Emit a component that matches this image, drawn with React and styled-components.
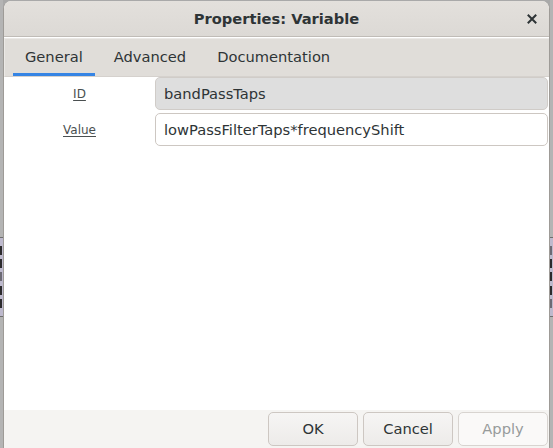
import React, { useState } from 'react';
import styled, { createGlobalStyle } from 'styled-components';

const GlobalStyle = createGlobalStyle`
  html, body {
    margin: 0;
    padding: 0;
    background: #a9a9a9;
  }
  body {
    font-family: "DejaVu Sans", "Liberation Sans", sans-serif;
    color: #2e3436;
  }
`;

const Screen = styled.div`
  display: flex;
  flex-direction: row;
  width: 553px;
  height: 448px;
  overflow: hidden;
`;

const BackStrip = styled.div`
  display: flex;
  flex-direction: column;
  width: 3px;
  background: #b4b4b4;
  padding-top: 237px;
  align-items: ${p => (p.side === 'left' ? 'flex-end' : 'flex-start')};
`;

const BackWindow = styled.div`
  width: 3px;
  height: 80px;
  background: #bdb9cd;
  border-top: 1px solid #6e6e6e;
  border-bottom: 1px solid #6e6e6e;
  display: flex;
  flex-direction: column;
  justify-content: space-around;
  padding: 6px 0;
  box-sizing: border-box;
`;

const BackText = styled.div`
  height: 9px;
  width: 2px;
  background: #1c1c1c;
  opacity: ${p => p.dim ? 0.5 : 0.9};
`;

const Dialog = styled.div`
  flex: 1;
  display: flex;
  flex-direction: column;
  margin-top: 1px;
  background: #ffffff;
  border-left: 1px solid #9e9b97;
  border-right: 1px solid #9e9b97;
  border-radius: 8px 8px 0 0;
  overflow: hidden;
`;

const TitleBar = styled.div`
  height: 35px;
  display: flex;
  align-items: center;
  justify-content: center;
  position: relative;
  background: linear-gradient(#e3e0dc, #dcd9d5);
  border-bottom: 1px solid #c0bcb7;
`;

const Title = styled.div`
  font-size: 14.67px;
  font-weight: bold;
  color: #2e3436;
`;

const CloseButton = styled.div`
  position: absolute;
  right: 12px;
  top: 12px;
  width: 11px;
  height: 11px;
  display: flex;
  align-items: center;
  justify-content: center;
`;

const TabStrip = styled.div`
  height: 37px;
  margin-top: 1px;
  display: flex;
  flex-direction: row;
  gap: 7px;
  padding-left: 8px;
  background: #e0ddd9;
  border-top: 1px solid #ebe9e6;
  border-left: 1px solid #ebe9e6;
  border-bottom: 1px solid #d5d1cd;
`;

const Tab = styled.div`
  display: flex;
  align-items: center;
  padding: 0 12px;
  padding-top: 1px;
  font-size: 14.67px;
  color: #2e3436;
  border-bottom: 3px solid ${p => (p.active ? '#3584e4' : 'transparent')};
`;

const Content = styled.div`
  flex: 1;
  display: grid;
  grid-template-columns: 151px 1fr;
  grid-auto-rows: 33px;
  row-gap: 3px;
  align-content: start;
  padding: 0 1px 0 0;
  background: #ffffff;
`;

const Label = styled.div`
  display: flex;
  align-items: center;
  justify-content: center;
  font-size: 12px;
  color: #4a4f50;
  text-decoration: underline;
  text-underline-offset: 2px;
`;

const Entry = styled.div`
  display: flex;
  align-items: center;
  padding-left: 8px;
  font-size: 14.67px;
  color: #2e3436;
  border: 1px solid ${p => (p.readOnly ? '#d0ccc8' : '#cdc7c2')};
  border-radius: 5px;
  background: ${p => (p.readOnly ? '#dedede' : '#ffffff')};
`;

const ButtonBar = styled.div`
  height: 38px;
  display: flex;
  flex-direction: row;
  justify-content: flex-end;
  align-items: center;
  gap: 5px;
  padding-right: 1px;
  background: #f5f4f2;
`;

const Button = styled.button`
  width: 90px;
  height: 34px;
  padding: 0 0 1px;
  font-family: "DejaVu Sans", "Liberation Sans", sans-serif;
  font-size: 14.67px;
  color: ${p => (p.disabled ? '#979b9b' : '#2e3436')};
  background: ${p => (p.disabled ? '#faf9f8' : 'linear-gradient(#f6f5f4, #edebe9)')};
  border: 1px solid ${p => (p.disabled ? '#d8d4d0' : '#cdc7c2')};
  border-radius: 5px;
`;

export default function App() {
  const [tab, setTab] = useState('General');
  const tabs = ['General', 'Advanced', 'Documentation'];

  return (
    <>
      <GlobalStyle />
      <Screen>
        <BackStrip side="left">
          <BackWindow>
            <BackText />
            <BackText />
            <BackText dim />
            <BackText />
            <BackText />
          </BackWindow>
        </BackStrip>
        <Dialog>
          <TitleBar>
            <Title>Properties: Variable</Title>
            <CloseButton>
              <svg width="10" height="10" viewBox="0 0 10 10">
                <path d="M1.5 1.5 L8.5 8.5 M8.5 1.5 L1.5 8.5" stroke="#2e3436" strokeWidth="2" strokeLinecap="square" />
              </svg>
            </CloseButton>
          </TitleBar>
          <TabStrip>
            {tabs.map(t => (
              <Tab key={t} active={t === tab} onClick={() => setTab(t)}>{t}</Tab>
            ))}
          </TabStrip>
          <Content>
            <Label>ID</Label>
            <Entry readOnly>bandPassTaps</Entry>
            <Label>Value</Label>
            <Entry>lowPassFilterTaps*frequencyShift</Entry>
          </Content>
          <ButtonBar>
            <Button>OK</Button>
            <Button>Cancel</Button>
            <Button disabled>Apply</Button>
          </ButtonBar>
        </Dialog>
        <BackStrip side="right">
          <BackWindow>
            <BackText dim />
            <BackText />
            <BackText />
            <BackText />
            <BackText dim />
          </BackWindow>
        </BackStrip>
      </Screen>
    </>
  );
}
